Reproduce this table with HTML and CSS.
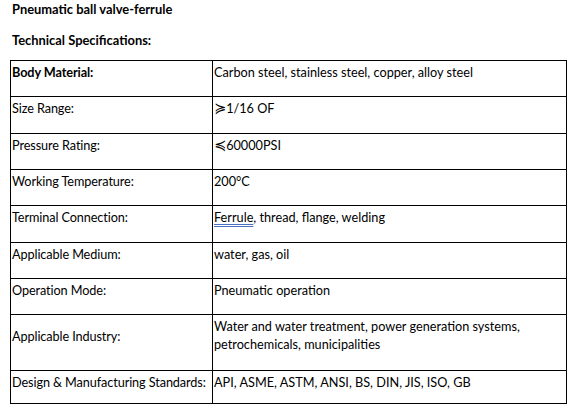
FILE: index.html
```html
<!DOCTYPE html>
<html>
<head>
<meta charset="utf-8">
<link rel="stylesheet" href="styles.css">
</head>
<body>
<h1 class="title">Pneumatic ball valve-ferrule</h1>
<h2 class="subtitle">Technical Specifications:</h2>
<table class="spec">
  <tr class="r36"><td class="label"><strong>Body Material:</strong></td><td>Carbon steel, stainless steel, copper, alloy steel</td></tr>
  <tr class="r37"><td class="label">Size Range:</td><td><span class="sym">≽</span>1/16 OF</td></tr>
  <tr class="r36"><td class="label">Pressure Rating:</td><td><span class="sym">≼</span>60000PSI</td></tr>
  <tr class="r36"><td class="label">Working Temperature:</td><td>200°C</td></tr>
  <tr class="r37"><td class="label">Terminal Connection:</td><td><span class="check">Ferrule</span>, thread, flange, welding</td></tr>
  <tr class="r36"><td class="label">Applicable Medium:</td><td>water, gas, oil</td></tr>
  <tr class="r36"><td class="label">Operation Mode:</td><td>Pneumatic operation</td></tr>
  <tr class="r56"><td class="label mid">Applicable Industry:</td><td>Water and water treatment, power generation systems,<br>petrochemicals, municipalities</td></tr>
  <tr class="r33"><td class="label">Design &amp; Manufacturing Standards:</td><td>API, ASME, ASTM, ANSI, BS, DIN, JIS, ISO, GB</td></tr>
</table>
</body>
</html>
```

FILE: styles.css
```css
html, body {
  margin: 0;
  padding: 0;
  background: #ffffff;
}
body {
  font-family: "Lato", "Open Sans", sans-serif;
  font-size: 12.7px;
  color: #000000;
  padding: 0 10px;
}
.title, .subtitle {
  font-size: 12.9px;
  font-weight: bold;
  margin: 0;
  padding-left: 2px;
  line-height: 18px;
}
.subtitle {
  margin-top: 13px;
  margin-bottom: 11px;
}
.spec {
  border-collapse: collapse;
  width: 557px;
  table-layout: fixed;
}
.spec td {
  border: 1px solid #000000;
  vertical-align: top;
  padding: 2px 1px 0 1px;
  line-height: 18px;
}
.spec td.label {
  width: 199px;
  white-space: nowrap;
  letter-spacing: -0.1px;
}
.spec td.mid {
  vertical-align: middle;
  padding-top: 0;
  padding-bottom: 14px;
}
.sym {
  font-family: "DejaVu Sans", sans-serif;
  font-size: 14.5px;
  line-height: 1;
}
.r36 { height: 36px; }
.r37 { height: 37px; }
.r56 { height: 56px; }
.r33 { height: 33px; }
.check {
  text-decoration: underline double #4a6fc0;
  text-underline-offset: 2px;
}
```
